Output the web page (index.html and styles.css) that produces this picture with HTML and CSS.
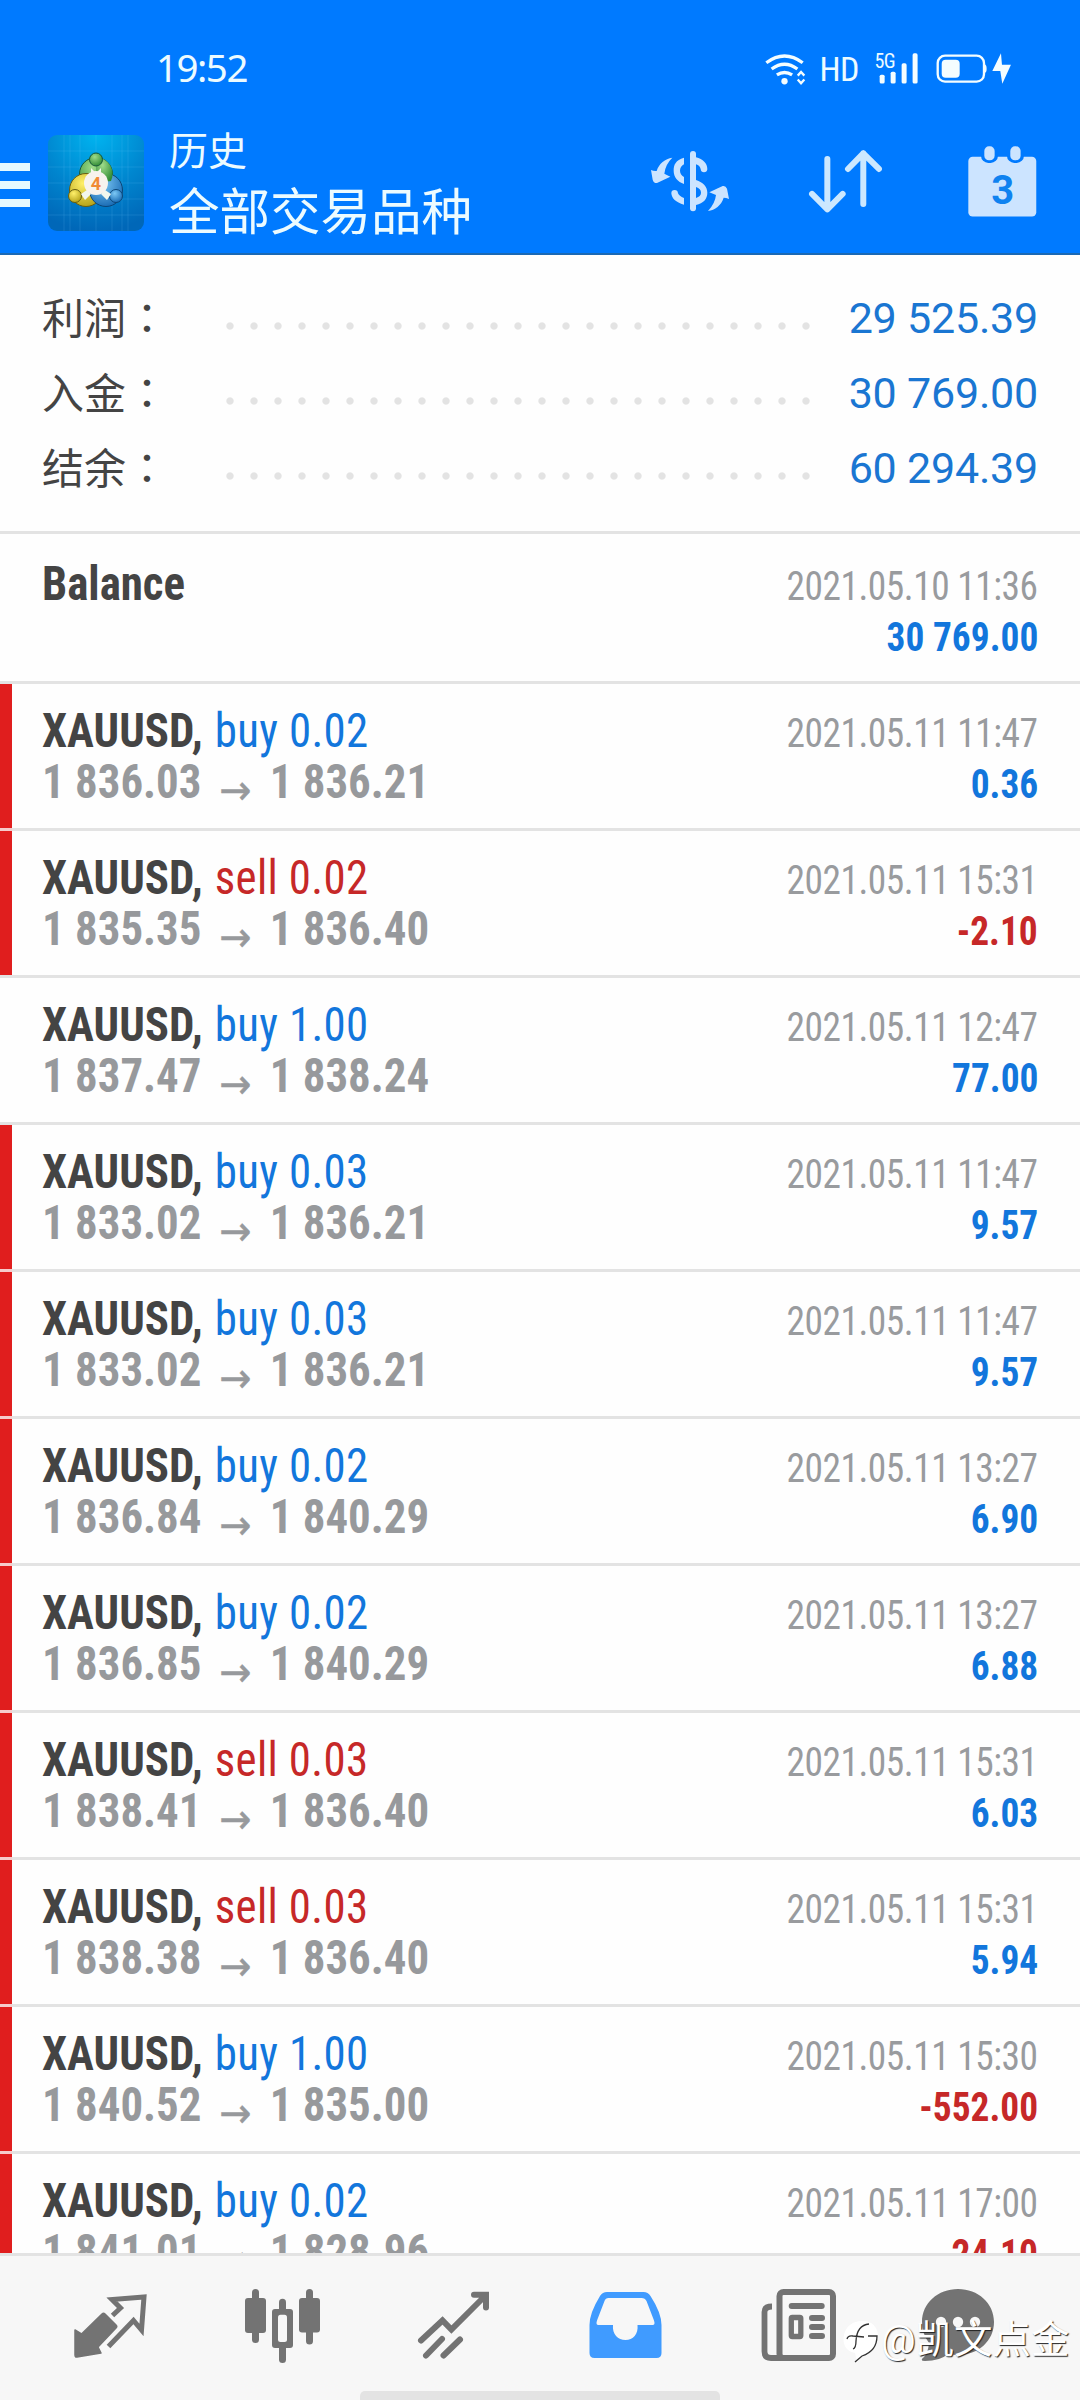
FILE: index.html
```html
<!DOCTYPE html>
<html lang="zh-CN">
<head>
<meta charset="utf-8">
<title>历史</title>
<link rel="stylesheet" href="styles.css">
</head>
<body>
<div class="screen">
  <header class="header">
    <div class="status">
      <span class="clock">19:52</span>
      <div class="status-icons">
        <svg class="wifi" viewBox="430 68 124 96" width="41" height="32" fill="none" stroke="#f4fdff" stroke-width="10">
          <path d="M434 97Q489 56 544 97M450 116Q489 87 528 116M466 134Q489 119 512 134"/>
          <circle cx="489" cy="153" r="9.500" fill="#f4fdff" stroke="none"/>
          <path d="M529 136l10-11 10 11M529 148l10 11 10-11" stroke-width="7"/>
        </svg>
        <span class="hd">HD</span>
        <div class="signal">
          <span class="five-g">5G</span>
          <svg viewBox="760 70 134 94" width="44.6" height="31.3" fill="#f4fdff">
            <rect x="777" y="135" width="15" height="27" rx="5"/><rect x="810" y="126" width="15" height="36" rx="5"/>
            <rect x="843" y="101" width="15" height="61" rx="5"/><rect x="876" y="71" width="15" height="91" rx="5"/>
          </svg>
        </div>
        <svg class="battery" viewBox="946 70 228 94" width="76" height="31.3">
          <rect x="951" y="78" width="139" height="78" rx="22" fill="none" stroke="#f4fdff" stroke-width="7"/>
          <rect x="963" y="90" width="54" height="54" rx="12" fill="#f4fdff"/>
          <path d="M1092 104q6 2 6 13t-6 13z" fill="#f4fdff"/>
          <path d="M1141 71L1115 124H1139L1145 162L1171 105H1144z" fill="#f4fdff"/>
        </svg>
      </div>
    </div>
    <div class="toolbar">
      <div class="menu"><i></i><i></i><i></i></div>
      <svg class="app-icon" viewBox="0 0 96 96" width="96" height="96">
        <defs>
          <radialGradient id="bg" cx=".5" cy="0" r="1"><stop offset="0" stop-color="#00b4f0"/><stop offset=".55" stop-color="#0086cf"/><stop offset="1" stop-color="#0067b8"/></radialGradient>
          <radialGradient id="gr" cx=".4" cy=".3" r=".8"><stop offset="0" stop-color="#9fdc8a"/><stop offset="1" stop-color="#23822b"/></radialGradient>
          <radialGradient id="ye" cx=".4" cy=".3" r=".8"><stop offset="0" stop-color="#fff06a"/><stop offset="1" stop-color="#ad9a10"/></radialGradient>
          <radialGradient id="bl" cx=".4" cy=".3" r=".8"><stop offset="0" stop-color="#7cc8f5"/><stop offset="1" stop-color="#0e61ad"/></radialGradient>
        </defs>
        <rect width="96" height="96" rx="9" fill="url(#bg)"/>
        <path d="M16 0V96M22 0V96M32 0V96M48 0V96M64 0V96M74 0V96M80 0V96M0 16H96M0 32H96M0 48H96M0 64H96M0 80H96" stroke="#6fd0ff" stroke-opacity=".16"/>
        <g stroke="#17583a" stroke-width="1">
          <circle cx="48" cy="39" r="16.500" fill="url(#gr)"/>
          <circle cx="38" cy="55" r="16.500" fill="url(#ye)" stroke="#655d12"/>
          <circle cx="58" cy="55" r="16.500" fill="url(#bl)" stroke="#0b4678"/>
          <path d="M48 22.500A16.500 16.500 0 0 1 63 46L48 48z" fill="url(#gr)" stroke="none"/>
          <circle cx="48" cy="24.500" r="6.500" fill="url(#gr)"/>
          <circle cx="27" cy="61" r="6.500" fill="url(#ye)" stroke="#655d12"/>
          <circle cx="68" cy="61" r="6.500" fill="url(#bl)" stroke="#0b4678"/>
          <path d="M43 33l5 5 5-5v8H43zM33 59l6-4 4 4-6 6zM63 59l-6-4-4 4 6 6z" fill="#f2f7ee" stroke="none"/>
        </g>
        <circle cx="48" cy="48" r="12" fill="#f7f3ee"/>
        <text class="app-num" x="48" y="54.500" text-anchor="middle">4</text>
      </svg>
      <div class="titles"><div class="sub">历史</div><div class="main">全部交易品种</div></div>
      <div class="actions">
        <svg viewBox="90 360 240 186" width="80" height="62" fill="#cce4ff">
          <rect x="210" y="363" width="18" height="181" rx="9"/>
          <path d="M192 383C167 390 161 404 161 422C161 441 173 455 192 462V441C184 435 180 430 180 422C180 414 184 407 192 403z"/>
          <path d="M228 382C249 387 262 400 262 418Q261 427 252 427Q243 427 242 417Q240 407 228 403z"/>
          <path d="M228 450C250 458 262 470 262 488C262 507 250 520 228 525V504C238 500 243 496 243 488C243 480 238 475 228 471z"/>
          <path d="M192 524C167 517 155 505 154 490Q154 480 164 480Q173 480 174 490Q177 498 192 504z"/>
          <path d="M157 383C135 386 117 400 110 423Q101 424 93 420L98 449Q101 460 111 459L151 440L133 431Q136 403 157 383z"/>
          <path d="M264 543C285 540 304 526 311 503Q318 503 327 507L321 476Q317 466 308 468L268 487L288 495Q285 521 264 543z"/>
        </svg>
        <svg viewBox="566 360 226 194" width="75.300" height="64.600" fill="none" stroke="#cce8ff" stroke-width="18" stroke-linecap="round" stroke-linejoin="round">
          <path d="M624 390V540M578 495L624 541L670 495M732 525V373M686 420L732 373L779 420"/>
        </svg>
        <svg viewBox="1040 346 212 218" width="70.600" height="72.600">
          <rect x="1044" y="381" width="204" height="180" rx="13" fill="#cce4ff"/>
          <rect x="1082" y="340" width="51" height="60" rx="22" fill="#007aff"/><rect x="1160" y="340" width="51" height="60" rx="22" fill="#007aff"/>
          <rect x="1092" y="350" width="31" height="42" rx="14" fill="#cce4ff"/><rect x="1170" y="350" width="31" height="42" rx="14" fill="#cce4ff"/>
          <text class="cal-num" x="1147" y="522" text-anchor="middle">3</text>
        </svg>
      </div>
    </div>
  </header>

  <section class="summary">
    <div class="sum-row"><span class="label">利润<b lang="zh-TW">：</b></span><span class="dots"></span><span class="amount">29 525.39</span></div>
    <div class="sum-row"><span class="label">入金<b lang="zh-TW">：</b></span><span class="dots"></span><span class="amount">30 769.00</span></div>
    <div class="sum-row"><span class="label">结余<b lang="zh-TW">：</b></span><span class="dots"></span><span class="amount">60 294.39</span></div>
  </section>

  <main class="list">
    <div class="row balance">
      <div class="line"><span class="left"><span class="sym">Balance</span></span><span class="date">2021.05.10 11:36</span></div>
      <div class="line"><span></span><span class="val buy">30 769.00</span></div>
    </div>
    <div class="row red joined">
      <div class="line"><span class="left"><span class="sym">XAUUSD,</span><span class="op buy">buy 0.02</span></span><span class="date">2021.05.11 11:47</span></div>
      <div class="line"><span class="left price">1 836.03<i>→</i>1 836.21</span><span class="val buy">0.36</span></div>
    </div>
    <div class="row red">
      <div class="line"><span class="left"><span class="sym">XAUUSD,</span><span class="op sell">sell 0.02</span></span><span class="date">2021.05.11 15:31</span></div>
      <div class="line"><span class="left price">1 835.35<i>→</i>1 836.40</span><span class="val sell">-2.10</span></div>
    </div>
    <div class="row">
      <div class="line"><span class="left"><span class="sym">XAUUSD,</span><span class="op buy">buy 1.00</span></span><span class="date">2021.05.11 12:47</span></div>
      <div class="line"><span class="left price">1 837.47<i>→</i>1 838.24</span><span class="val buy">77.00</span></div>
    </div>
    <div class="row red joined">
      <div class="line"><span class="left"><span class="sym">XAUUSD,</span><span class="op buy">buy 0.03</span></span><span class="date">2021.05.11 11:47</span></div>
      <div class="line"><span class="left price">1 833.02<i>→</i>1 836.21</span><span class="val buy">9.57</span></div>
    </div>
    <div class="row red joined">
      <div class="line"><span class="left"><span class="sym">XAUUSD,</span><span class="op buy">buy 0.03</span></span><span class="date">2021.05.11 11:47</span></div>
      <div class="line"><span class="left price">1 833.02<i>→</i>1 836.21</span><span class="val buy">9.57</span></div>
    </div>
    <div class="row red joined">
      <div class="line"><span class="left"><span class="sym">XAUUSD,</span><span class="op buy">buy 0.02</span></span><span class="date">2021.05.11 13:27</span></div>
      <div class="line"><span class="left price">1 836.84<i>→</i>1 840.29</span><span class="val buy">6.90</span></div>
    </div>
    <div class="row red joined">
      <div class="line"><span class="left"><span class="sym">XAUUSD,</span><span class="op buy">buy 0.02</span></span><span class="date">2021.05.11 13:27</span></div>
      <div class="line"><span class="left price">1 836.85<i>→</i>1 840.29</span><span class="val buy">6.88</span></div>
    </div>
    <div class="row red joined">
      <div class="line"><span class="left"><span class="sym">XAUUSD,</span><span class="op sell">sell 0.03</span></span><span class="date">2021.05.11 15:31</span></div>
      <div class="line"><span class="left price">1 838.41<i>→</i>1 836.40</span><span class="val buy">6.03</span></div>
    </div>
    <div class="row red joined">
      <div class="line"><span class="left"><span class="sym">XAUUSD,</span><span class="op sell">sell 0.03</span></span><span class="date">2021.05.11 15:31</span></div>
      <div class="line"><span class="left price">1 838.38<i>→</i>1 836.40</span><span class="val buy">5.94</span></div>
    </div>
    <div class="row red joined">
      <div class="line"><span class="left"><span class="sym">XAUUSD,</span><span class="op buy">buy 1.00</span></span><span class="date">2021.05.11 15:30</span></div>
      <div class="line"><span class="left price">1 840.52<i>→</i>1 835.00</span><span class="val sell">-552.00</span></div>
    </div>
    <div class="row red">
      <div class="line"><span class="left"><span class="sym">XAUUSD,</span><span class="op buy">buy 0.02</span></span><span class="date">2021.05.11 17:00</span></div>
      <div class="line"><span class="left price">1 841.01<i>→</i>1 828.96</span><span class="val sell">-24.10</span></div>
    </div>
  </main>

  <nav class="nav">
    <svg viewBox="72 2284 76 80" width="76" height="80">
      <path d="M75 2330l6.500 4L102 2314q1.500-1.500 3 0l11 11q1.500 1.500 0 3l-18 19 3 6-24 4q-2 .5-2-2z" fill="#737373" stroke="#737373" stroke-width="1.500" stroke-linejoin="round"/>
      <path d="M112.500 2315.500l8-7.500-8.500-8.500 32-2.500-2.500 33-8-9.500-25 26" fill="none" stroke="#737373" stroke-width="5" />
    </svg>
    <svg viewBox="243 2284 77 80" width="77" height="80" fill="#737373">
      <rect x="244" y="2298" width="21" height="35" rx="3"/><rect x="251" y="2289" width="7" height="54" rx="3.500"/>
      <rect x="271" y="2309" width="21" height="39" rx="3"/><rect x="278" y="2298.700" width="7" height="64.300" rx="3.500"/>
      <rect x="277" y="2314.700" width="9" height="27.300" rx="2.500" fill="#f7f7f7"/>
      <rect x="298" y="2298" width="21" height="34.500" rx="3"/><rect x="305" y="2289" width="7" height="55.500" rx="3.500"/>
    </svg>
    <svg viewBox="416 2284 75 80" width="75" height="80" fill="none" stroke="#737373" stroke-width="6" stroke-linecap="round">
      <path d="M421 2340.500L442.500 2320.500L451.400 2329.500L485 2296M474 2294.700H486V2307.500" />
      <path d="M426 2355.500L442 2339M443.500 2355.500L460 2339.500"/>
    </svg>
    <svg viewBox="588 2284 77 80" width="77" height="80">
      <path d="M608 2292H644.500Q649 2292 651.500 2296Q662.500 2313 662.500 2325V2353Q662.500 2358 657.500 2358H595.500Q590.500 2358 590.500 2353V2325Q590.500 2313 601 2296Q603.500 2292 608 2292z" fill="#409bff"/>
      <path d="M609.500 2298H642.500Q646 2298 647.500 2301L655 2320.500Q656.500 2325 653.500 2325H638.500C639.500 2334 634 2340 626.500 2340C619 2340 613 2334 614 2325H599.500Q596.500 2325 598 2320.500L605.500 2301Q606.500 2298 609.500 2298z" fill="#f7f7f7"/>
    </svg>
    <svg viewBox="760 2284 80 80" width="80" height="80">
      <path d="M773 2306.500Q765.500 2306.500 765.500 2312V2351.500Q765.500 2358 772 2358H785" fill="none" stroke="#737373" stroke-width="5.800"/>
      <rect x="780.500" y="2292" width="53.500" height="66" rx="4" fill="none" stroke="#737373" stroke-width="6"/>
      <rect x="789.700" y="2303" width="36" height="6" rx="3" fill="#737373"/>
      <rect x="792.300" y="2317.500" width="9.500" height="19" rx="1" fill="none" stroke="#737373" stroke-width="5.300"/>
      <path d="M813 2318H823M813 2327H823M813 2336H823" stroke="#737373" stroke-width="6" stroke-linecap="round"/>
    </svg>
    <svg class="chat" viewBox="920 2284 76 80" width="76" height="80">
      <path d="M958 2289C978 2289 994 2303 994 2322C994 2341 978 2355 958 2355Q952 2355 948 2354Q940 2361 925 2361Q919 2361 924 2357Q928 2353 929 2343Q922 2334 922 2322C922 2303 938 2289 958 2289z" fill="#737373"/>
      <g fill="#f7f7f7"><circle cx="941" cy="2322" r="5.200"/><circle cx="958" cy="2322" r="5.200"/><circle cx="975" cy="2322" r="5.200"/></g>
    </svg>
    <div class="home-bar"></div>
    <div class="watermark">
      <svg viewBox="843 2318 38 46" width="38" height="46">
        <path d="M862 2322C872 2321 879 2329 878 2339C877 2349 869 2356 862 2357L857 2363L855 2354C846 2352 842 2345 844 2336C846 2327 853 2322 862 2322z" fill="#fff"/>
        <path d="M847 2340Q848 2336 853 2337L864 2338M853 2350Q856 2349 856 2342Q857 2326 869 2325M868 2337H877Q877 2352 862 2357L855 2363" fill="none" stroke="#333" stroke-width="1.300"/>
      </svg>
      <span>@凯文点金</span>
    </div>
  </nav>
</div>
</body>
</html>
```
FILE: styles.css
```css
* { box-sizing: border-box; }
body { margin: 0; background: #fefefe; }
svg { display: block; flex: none; }
.screen {
  width: 1080px; height: 2400px; overflow: hidden;
  display: flex; flex-direction: column;
  font-family: Roboto, "Noto Sans CJK SC", sans-serif;
}

/* header */
.header { height: 255px; flex: none; background: #007aff; border-bottom: 2px solid #1b69b4; color: #ecfbff; }
.status { height: 132px; padding: 5px 68px 0 156px; display: flex; justify-content: space-between; align-items: center; }
.clock { font: 400 38.5px/44px "Noto Sans", sans-serif; letter-spacing: -1.5px; margin-top: -3px; }
.status-icons { display: flex; align-items: center; }
.hd { font: 400 34px/40px Roboto, sans-serif; font-stretch: 85%; letter-spacing: -.5px; margin-left: 13px; width: 37px; }
.signal { position: relative; margin-left: 18px; }
.five-g { position: absolute; left: 0; top: -2px; font: 400 20px/20px Roboto, sans-serif; font-stretch: 85%; letter-spacing: -.5px; }
.battery { margin-left: 17px; }
.toolbar { display: flex; align-items: flex-start; height: 121px; }
.menu { width: 30px; margin-top: 31px; display: flex; flex-direction: column; gap: 10px; }
.menu i { height: 8px; background: #e6f9ff; }
.app-icon { margin: 3px 0 0 18px; }
.app-num { font: 700 18px Roboto, sans-serif; fill: #f08a35; }
.titles { margin-left: 25px; width: 481px; }
.sub { font-size: 39px; line-height: 40px; }
.main { font-size: 50.5px; line-height: 60px; margin-top: 11px; }
.actions { display: flex; align-items: center; height: 102px; gap: 78px; margin-top: -2px; }
.actions svg:last-child { margin-left: 6px; }
.cal-num { font: 700 120px Roboto, sans-serif; fill: #0f82f0; }

/* totals */
.summary { height: 279px; flex: none; padding: 27px 42px 0 42px; border-bottom: 3px solid #e3e3e3; }
.sum-row { height: 75px; display: flex; align-items: center; }
.label { font-size: 42px; line-height: 75px; width: 176px; margin-top: -9px; color: #444; font-family: "Noto Sans CJK SC", sans-serif; }
.label b { font-weight: 400; font-family: "Noto Sans CJK TC", sans-serif; }
.dots { width: 600px; height: 24px; margin-top: 12px; background: radial-gradient(circle, #e3e3e3 3.2px, transparent 4.1px) 0 0 / 24px 24px; }
.amount { margin: -4px 0 0 auto; font-size: 43px; letter-spacing: -.2px; color: #1a76d2; }

/* history */
.list { flex: 1; min-height: 0; overflow: hidden; }
.row { height: 147px; padding: 21px 42px 0 42px; border-bottom: 3px solid #e3e3e3; position: relative; font-stretch: 75%; }
.row.balance { height: 150px; padding-top: 24px; }
.row.balance .val { padding-top: 3px; }
.row.red::before { content: ""; position: absolute; left: 0; top: 0; width: 12px; height: 144px; background: #e01e1e; }
.row.joined::after { content: ""; position: absolute; left: 0; bottom: -3px; width: 12px; height: 3px; background: #f6cccc; }
.line { height: 51px; line-height: 51px; display: flex; justify-content: space-between; align-items: baseline; white-space: pre; }
.left { transform: scaleX(.935); transform-origin: left; }
.sym, .op, .price { font-size: 48px; }
.sym { font-weight: 700; color: #444; }
.op { margin-left: 13px; letter-spacing: .35px; }
.buy { color: #1276dc; }
.sell { color: #c62828; }
.price { font-weight: 700; color: #97999c; }
.price i { display: inline-block; width: 73px; height: 30px; vertical-align: -6px; text-align: center; font: 400 41px/30px "DejaVu Sans", sans-serif; -webkit-text-stroke: .5px; }
.price i { vertical-align: baseline; position: relative; top: 6px; }
.date, .val { transform: scaleX(.935); transform-origin: right; font-size: 40px; }
.date { letter-spacing: -.5px; color: #999b9e; }
.val { font-weight: 700; }

/* bottom navigation */
.nav { height: 147px; flex: none; background: #f7f7f7; border-top: 3px solid #e3e3e3; position: relative; display: flex; gap: 95.5px; padding: 28px 84px 0 72px; }
.chat { margin-left: -15px; }
.home-bar { position: absolute; left: 360px; bottom: 0; width: 360px; height: 9px; border-radius: 5px 5px 0 0; background: #e3e3e3; }
.watermark { position: absolute; left: 843px; top: 61px; display: flex; align-items: center; color: #fff; font: 400 38.5px/46px Roboto, "Noto Sans CJK SC", sans-serif; text-shadow: 1px 1px 1px #222; white-space: nowrap; }
```
